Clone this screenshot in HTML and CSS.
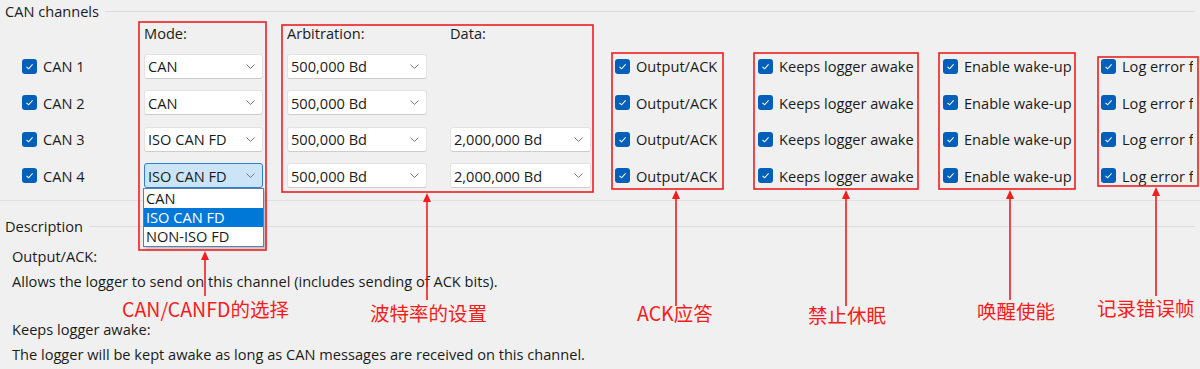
FILE: index.html
```html
<!DOCTYPE html>
<html lang="en">
<head>
  <meta charset="UTF-8">
  <title>CAN channels</title>
  <link rel="stylesheet" href="styles.css">
</head>
<body>
  <div class="page">

    <section class="group channels">
      <div class="legend"><span>CAN channels</span></div>
      <div class="grid">
        <div></div>
        <div class="colhead">Mode:</div>
        <div class="colhead">Arbitration:</div>
        <div class="colhead">Data:</div>
        <div></div><div></div><div></div><div></div>

        <!-- CAN 1 -->
        <label class="check"><span class="box"><svg viewBox="0 0 15 15"><path d="M4.5 7.8 L6.6 9.8 L10.6 5.4"/></svg></span>CAN 1</label>
        <div class="combo mode"><span>CAN</span><svg class="chev" viewBox="0 0 9 5"><path d="M0.5 0.5 L4.5 4.5 L8.5 0.5"/></svg></div>
        <div class="combo arb"><span>500,000 Bd</span><svg class="chev" viewBox="0 0 9 5"><path d="M0.5 0.5 L4.5 4.5 L8.5 0.5"/></svg></div>
        <div></div>
        <label class="check"><span class="box"><svg viewBox="0 0 15 15"><path d="M4.5 7.8 L6.6 9.8 L10.6 5.4"/></svg></span>Output/ACK</label>
        <label class="check"><span class="box"><svg viewBox="0 0 15 15"><path d="M4.5 7.8 L6.6 9.8 L10.6 5.4"/></svg></span>Keeps logger awake</label>
        <label class="check"><span class="box"><svg viewBox="0 0 15 15"><path d="M4.5 7.8 L6.6 9.8 L10.6 5.4"/></svg></span>Enable wake-up</label>
        <label class="check clip"><span class="box"><svg viewBox="0 0 15 15"><path d="M4.5 7.8 L6.6 9.8 L10.6 5.4"/></svg></span>Log error frames</label>

        <!-- CAN 2 -->
        <label class="check"><span class="box"><svg viewBox="0 0 15 15"><path d="M4.5 7.8 L6.6 9.8 L10.6 5.4"/></svg></span>CAN 2</label>
        <div class="combo mode"><span>CAN</span><svg class="chev" viewBox="0 0 9 5"><path d="M0.5 0.5 L4.5 4.5 L8.5 0.5"/></svg></div>
        <div class="combo arb"><span>500,000 Bd</span><svg class="chev" viewBox="0 0 9 5"><path d="M0.5 0.5 L4.5 4.5 L8.5 0.5"/></svg></div>
        <div></div>
        <label class="check"><span class="box"><svg viewBox="0 0 15 15"><path d="M4.5 7.8 L6.6 9.8 L10.6 5.4"/></svg></span>Output/ACK</label>
        <label class="check"><span class="box"><svg viewBox="0 0 15 15"><path d="M4.5 7.8 L6.6 9.8 L10.6 5.4"/></svg></span>Keeps logger awake</label>
        <label class="check"><span class="box"><svg viewBox="0 0 15 15"><path d="M4.5 7.8 L6.6 9.8 L10.6 5.4"/></svg></span>Enable wake-up</label>
        <label class="check clip"><span class="box"><svg viewBox="0 0 15 15"><path d="M4.5 7.8 L6.6 9.8 L10.6 5.4"/></svg></span>Log error frames</label>

        <!-- CAN 3 -->
        <label class="check"><span class="box"><svg viewBox="0 0 15 15"><path d="M4.5 7.8 L6.6 9.8 L10.6 5.4"/></svg></span>CAN 3</label>
        <div class="combo mode"><span>ISO CAN FD</span><svg class="chev" viewBox="0 0 9 5"><path d="M0.5 0.5 L4.5 4.5 L8.5 0.5"/></svg></div>
        <div class="combo arb"><span>500,000 Bd</span><svg class="chev" viewBox="0 0 9 5"><path d="M0.5 0.5 L4.5 4.5 L8.5 0.5"/></svg></div>
        <div class="combo data"><span>2,000,000 Bd</span><svg class="chev" viewBox="0 0 9 5"><path d="M0.5 0.5 L4.5 4.5 L8.5 0.5"/></svg></div>
        <label class="check"><span class="box"><svg viewBox="0 0 15 15"><path d="M4.5 7.8 L6.6 9.8 L10.6 5.4"/></svg></span>Output/ACK</label>
        <label class="check"><span class="box"><svg viewBox="0 0 15 15"><path d="M4.5 7.8 L6.6 9.8 L10.6 5.4"/></svg></span>Keeps logger awake</label>
        <label class="check"><span class="box"><svg viewBox="0 0 15 15"><path d="M4.5 7.8 L6.6 9.8 L10.6 5.4"/></svg></span>Enable wake-up</label>
        <label class="check clip"><span class="box"><svg viewBox="0 0 15 15"><path d="M4.5 7.8 L6.6 9.8 L10.6 5.4"/></svg></span>Log error frames</label>

        <!-- CAN 4 -->
        <label class="check"><span class="box"><svg viewBox="0 0 15 15"><path d="M4.5 7.8 L6.6 9.8 L10.6 5.4"/></svg></span>CAN 4</label>
        <div class="combo-wrap">
          <div class="combo mode open"><span>ISO CAN FD</span><svg class="chev" viewBox="0 0 9 5"><path d="M0.5 0.5 L4.5 4.5 L8.5 0.5"/></svg></div>
          <ul class="droplist">
            <li>CAN</li>
            <li class="sel">ISO CAN FD</li>
            <li>NON-ISO FD</li>
          </ul>
        </div>
        <div class="combo arb"><span>500,000 Bd</span><svg class="chev" viewBox="0 0 9 5"><path d="M0.5 0.5 L4.5 4.5 L8.5 0.5"/></svg></div>
        <div class="combo data"><span>2,000,000 Bd</span><svg class="chev" viewBox="0 0 9 5"><path d="M0.5 0.5 L4.5 4.5 L8.5 0.5"/></svg></div>
        <label class="check"><span class="box"><svg viewBox="0 0 15 15"><path d="M4.5 7.8 L6.6 9.8 L10.6 5.4"/></svg></span>Output/ACK</label>
        <label class="check"><span class="box"><svg viewBox="0 0 15 15"><path d="M4.5 7.8 L6.6 9.8 L10.6 5.4"/></svg></span>Keeps logger awake</label>
        <label class="check"><span class="box"><svg viewBox="0 0 15 15"><path d="M4.5 7.8 L6.6 9.8 L10.6 5.4"/></svg></span>Enable wake-up</label>
        <label class="check clip"><span class="box"><svg viewBox="0 0 15 15"><path d="M4.5 7.8 L6.6 9.8 L10.6 5.4"/></svg></span>Log error frames</label>
      </div>
    </section>

    <section class="group desc">
      <div class="legend"><span>Description</span></div>
      <p>Output/ACK:</p>
      <p>Allows the logger to send on this channel (includes sending of ACK bits).</p>
      <p class="next">Keeps logger awake:</p>
      <p>The logger will be kept awake as long as CAN messages are received on this channel.</p>
    </section>

    <!-- red annotations drawn over the screenshot -->
    <svg class="notes" viewBox="0 0 1200 369">
      <g class="frames">
        <rect x="139" y="22" width="127" height="228"/>
        <rect x="282" y="25" width="311" height="167"/>
        <rect x="612" y="53" width="111" height="136"/>
        <rect x="754" y="53" width="164" height="136"/>
        <rect x="939" y="53" width="136" height="136"/>
        <rect x="1098" y="57" width="100" height="129"/>
      </g>
      <g class="arrows">
        <line x1="205" y1="256" x2="205" y2="296"/>
        <line x1="427" y1="198" x2="427" y2="300"/>
        <line x1="676" y1="195" x2="676" y2="306"/>
        <line x1="846" y1="195" x2="846" y2="306"/>
        <line x1="1010" y1="195" x2="1010" y2="300"/>
        <line x1="1156" y1="192" x2="1156" y2="296"/>
      </g>
      <g class="heads">
        <polygon points="205,251 201,260 209,260"/>
        <polygon points="427,193 423,202 431,202"/>
        <polygon points="676,190 672,199 680,199"/>
        <polygon points="846,190 842,199 850,199"/>
        <polygon points="1010,190 1006,199 1014,199"/>
        <polygon points="1156,187 1152,196 1160,196"/>
      </g>
      <g class="labels">
        <text x="122" y="317">CAN/CANFD的选择</text>
        <text x="370" y="321">波特率的设置</text>
        <text x="637" y="321">ACK应答</text>
        <text x="808" y="323">禁止休眠</text>
        <text x="977" y="319">唤醒使能</text>
        <text x="1097" y="316">记录错误帧</text>
      </g>
    </svg>

  </div>
</body>
</html>
```

FILE: styles.css
```css
body {
  margin: 0;
  background: #f0f0f0;
  font-family: "Open Sans", "Noto Sans", sans-serif;
  font-size: 14.6px;
  color: #1b1b1b;
}

.page {
  position: relative;
  width: 1200px;
  height: 369px;
  overflow: hidden;
}

.legend {
  display: flex;
  align-items: center;
  height: 22px;
  padding-left: 5px;
}

.legend::after {
  content: "";
  flex: 1;
  border-top: 1px solid #dcdcdc;
  margin: 0 5px 0 6px;
}

.channels {
  padding-bottom: 6px;
  border-bottom: 1px solid #e0e0e0;
}

.grid {
  display: grid;
  grid-template-columns: 122px 143px 163px 165px 143px 185px 158px 92px;
  grid-template-rows: 26px repeat(4, 36.5px);
  align-items: center;
  padding-left: 22px;
}

.colhead {
  align-self: start;
  line-height: 22px;
}

.check {
  display: flex;
  align-items: center;
  gap: 6px;
  white-space: nowrap;
}

.check.clip {
  overflow: hidden;
}

.box {
  flex: none;
  width: 15px;
  height: 15px;
  border-radius: 3px;
  background: #005fb8;
  display: flex;
}

.box svg {
  width: 15px;
  height: 15px;
  fill: none;
  stroke: #fff;
  stroke-width: 1.1;
}

.combo {
  display: flex;
  align-items: center;
  justify-content: space-between;
  box-sizing: border-box;
  height: 25px;
  padding: 0 7px 0 3px;
  background: #fff;
  border: 1px solid #e3e3e3;
  border-bottom-color: #cdcdcd;
  border-radius: 3px;
  white-space: nowrap;
}

.combo.mode { width: 119px; }
.combo.arb { width: 140px; }
.combo.data { width: 141px; }

.combo.open {
  background: #cce4f7;
  border-color: #2f7fd0;
}

.chev {
  width: 9px;
  height: 5px;
  fill: none;
  stroke: #7a7a7a;
  stroke-width: 1;
}

.combo-wrap {
  position: relative;
}

.droplist {
  position: absolute;
  top: 25px;
  left: -1px;
  width: 121px;
  margin: 0;
  padding: 0;
  list-style: none;
  box-sizing: border-box;
  background: #fff;
  border: 1px solid #5b7fae;
  box-shadow: 2px 2px 3px rgba(0, 0, 0, 0.22);
  z-index: 2;
}

.droplist li {
  height: 19px;
  line-height: 19px;
  padding-left: 2px;
}

.droplist li.sel {
  background: #0078d7;
  color: #fff;
}

.desc {
  margin-top: 14px;
}

.desc p {
  margin: 0;
  padding-left: 12px;
  line-height: 25px;
}

.desc .legend + p {
  margin-top: 7px;
}

.desc p.next {
  margin-top: 23px;
}

.notes {
  position: absolute;
  top: 0;
  left: 0;
  width: 1200px;
  height: 369px;
  pointer-events: none;
  z-index: 3;
}

.frames rect {
  fill: none;
  stroke: #f01e1e;
  stroke-width: 1.6;
}

.arrows line {
  stroke: #f01e1e;
  stroke-width: 1.6;
}

.heads polygon {
  fill: #f01e1e;
}

.labels text {
  fill: #f51c1c;
  font-family: "Noto Sans CJK SC", "Noto Sans", sans-serif;
  font-size: 19.5px;
}
```
